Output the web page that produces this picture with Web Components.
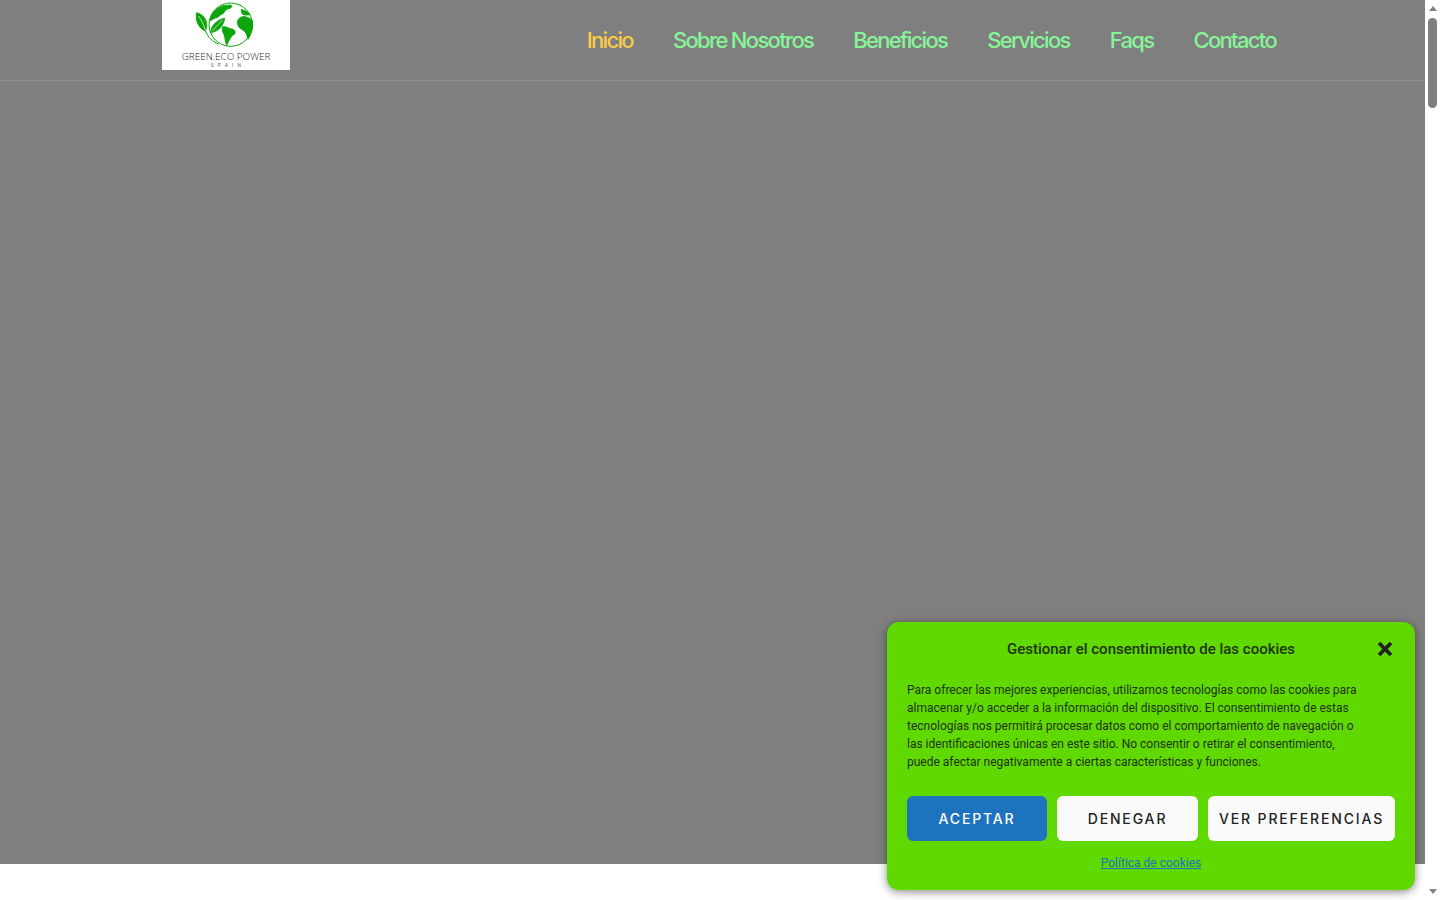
<!DOCTYPE html>
<html lang="es">
<head>
<meta charset="utf-8">
<title>Green Eco Power Spain</title>
<style>
  html, body { margin: 0; height: 100%; overflow: hidden; background: #fff; }
</style>
</head>
<body>
<site-page>
  <site-header slot="hero">
    <site-logo slot="logo"></site-logo>
    <nav-link active>Inicio</nav-link>
    <nav-link>Sobre Nosotros</nav-link>
    <nav-link>Beneficios</nav-link>
    <nav-link>Servicios</nav-link>
    <nav-link>Faqs</nav-link>
    <nav-link>Contacto</nav-link>
  </site-header>
  <cookie-banner slot="overlay">
    <span slot="title">Gestionar el consentimiento de las cookies</span>
    Para ofrecer las mejores experiencias, utilizamos tecnologías como las cookies para almacenar y/o acceder a la información del dispositivo. El consentimiento de estas tecnologías nos permitirá procesar datos como el comportamiento de navegación o las identificaciones únicas en este sitio. No consentir o retirar el consentimiento, puede afectar negativamente a ciertas características y funciones.
    <cookie-button slot="buttons" primary>Aceptar</cookie-button>
    <cookie-button slot="buttons">Denegar</cookie-button>
    <cookie-button slot="buttons">Ver preferencias</cookie-button>
    <span slot="policy">Política de cookies</span>
  </cookie-banner>
</site-page>

<script>
class SitePage extends HTMLElement {
  connectedCallback() {
    const shadow = this.attachShadow({ mode: 'open' });
    shadow.innerHTML = `
      <style>
        :host { display: flex; width: 1440px; height: 900px; position: relative; overflow: hidden; }
        .main { flex: 1; min-width: 0; background: #fff; }
        .hero { height: 864px; background: #7f7f7f; }
        .bar { width: 15px; background: #fff; display: flex; flex-direction: column; align-items: center; justify-content: space-between; padding: 6px 0 6px; box-sizing: border-box; position: relative; }
        .arrow { width: 0; height: 0; border-left: 4.5px solid transparent; border-right: 4.5px solid transparent; }
        .up { border-bottom: 5px solid #808080; }
        .down { border-top: 5px solid #808080; }
        .thumb { position: absolute; top: 18px; left: 3px; width: 9px; height: 90px; background: #7f7f7f; border-radius: 5px; }
      </style>
      <div class="main"><div class="hero"><slot name="hero"></slot></div></div>
      <div class="bar"><div class="arrow up"></div><div class="thumb"></div><div class="arrow down"></div></div>
      <slot name="overlay"></slot>
    `;
  }
}

class SiteHeader extends HTMLElement {
  connectedCallback() {
    const shadow = this.attachShadow({ mode: 'open' });
    shadow.innerHTML = `
      <style>
        :host { display: block; height: 81px; box-sizing: border-box; border-bottom: 1px solid #929292; }
        .row { display: flex; align-items: flex-start; padding-left: 162px; height: 80px; }
        nav { display: flex; gap: 40px; margin-left: auto; margin-right: 149px; height: 80px; align-items: center; }
      </style>
      <div class="row">
        <slot name="logo"></slot>
        <nav><slot></slot></nav>
      </div>
    `;
  }
}

class SiteLogo extends HTMLElement {
  connectedCallback() {
    const shadow = this.attachShadow({ mode: 'open' });
    shadow.innerHTML = `
      <style>
        :host { display: flex; flex-direction: column; align-items: center; width: 128px; height: 70px; background: #fff; overflow: hidden; }
        svg { display: block; width: 72px; height: 50px; flex: none; margin-left: -4px; }
        .name { font: 300 9.9px/10px "Open Sans", sans-serif; color: #222; white-space: nowrap; margin-top: 1px; }
        .sub { font: 400 5px/6px "Open Sans", sans-serif; color: #555; letter-spacing: 4px; margin: 1px -4px 0 0; }
      </style>
      <svg viewBox="0 0 216 150">
        <circle cx="128" cy="74" r="65" fill="none" stroke="#0ca50c" stroke-width="3"/>
        <g fill="#0ca50c" stroke="#0ca50c" stroke-width="2.5" stroke-linejoin="round">
          <path d="M66 62C68 42 82 25 105 17L128 15C134 18 132 24 122 26C112 28 110 36 104 42C94 44 92 54 82 54C76 56 72 62 66 62z"/>
          <path d="M148 65C150 55 160 48 172 50C180 52 190 56 193 62C196 80 192 100 180 118C176 108 176 96 164 90C154 84 148 78 148 65z"/>
          <path d="M160 28C168 32 178 32 186 44C176 46 168 46 162 42C164 38 158 34 160 28z"/>
          <path d="M104 80C112 78 118 84 128 86C140 88 144 94 140 102C130 108 126 116 122 124L116 136C112 128 112 116 108 104C104 96 100 88 104 80z"/>
          <path d="M68 98C68 80 84 60 110 55C108 72 96 94 68 98z"/>
          <path d="M26 38C44 42 58 58 56 78C56 84 54 90 52 92C34 88 20 62 26 38z"/>
        </g>
        <path fill="none" stroke="#fff" stroke-width="2" d="M32 48C40 60 48 76 52 90M72 94C82 82 92 72 104 60"/>
        <path fill="none" stroke="#0ca50c" stroke-width="3" d="M52 92C60 112 74 126 92 132"/>
      </svg>
      <div class="name">GREEN.ECO POWER</div>
      <div class="sub">SPAIN</div>
    `;
  }
}

class NavLink extends HTMLElement {
  connectedCallback() {
    const shadow = this.attachShadow({ mode: 'open' });
    shadow.innerHTML = `
      <style>
        :host { display: block; font: 500 22px/28px Inter, sans-serif; letter-spacing: -1.68px; color: #86f598; white-space: nowrap; cursor: pointer; }
        :host([active]) { color: #f7cd48; }
      </style>
      <slot></slot>
    `;
  }
}

class CookieButton extends HTMLElement {
  connectedCallback() {
    const shadow = this.attachShadow({ mode: 'open' });
    shadow.innerHTML = `
      <style>
        :host { display: flex; align-items: center; justify-content: center; flex: 1 1 auto; height: 45px; box-sizing: border-box; padding: 0 11px; border-radius: 6px; background: #f9f9f9; color: #222; font: 500 14px/1 Inter, sans-serif; letter-spacing: 1.85px; text-transform: uppercase; white-space: nowrap; cursor: pointer; }
        :host([primary]) { background: #1e73be; color: #fff; }
      </style>
      <slot></slot>
    `;
  }
}

class CookieBanner extends HTMLElement {
  connectedCallback() {
    const shadow = this.attachShadow({ mode: 'open' });
    shadow.innerHTML = `
      <style>
        :host { position: absolute; left: 887px; top: 622px; width: 528px; height: 268px; box-sizing: border-box; padding: 0 20px; background: #5fd900; border-radius: 12px; box-shadow: 0 2px 10px rgba(0,0,0,.45); color: #1f3313; font-family: Roboto, sans-serif; }
        .head { display: flex; align-items: center; justify-content: center; height: 54px; position: relative; }
        .title { font-size: 15px; font-weight: 500; line-height: 20px; }
        .close { position: absolute; right: 2px; top: 19px; width: 16px; height: 16px; }
        .text { margin: 5px 0 0; font-size: 12px; line-height: 18px; height: 90px; max-width: 456px; }
        .buttons { display: flex; gap: 10px; margin-top: 25px; }
        ::slotted(cookie-button:nth-of-type(1)) { flex: none; width: 140px; }
        ::slotted(cookie-button:nth-of-type(2)) { flex: none; width: 141px; }
        .policy { margin-top: 14px; text-align: center; font-size: 12px; line-height: 16px; color: #1e73be; text-decoration: underline; }
      </style>
      <div class="head">
        <div class="title"><slot name="title"></slot></div>
        <svg class="close" viewBox="0 0 16 16"><path d="M2 2l12 12M14 2L2 14" stroke="#222" stroke-width="3.8" fill="none"/></svg>
      </div>
      <p class="text"><slot></slot></p>
      <div class="buttons"><slot name="buttons"></slot></div>
      <div class="policy"><slot name="policy"></slot></div>
    `;
  }
}

customElements.define('site-page', SitePage);
customElements.define('site-header', SiteHeader);
customElements.define('site-logo', SiteLogo);
customElements.define('nav-link', NavLink);
customElements.define('cookie-button', CookieButton);
customElements.define('cookie-banner', CookieBanner);
</script>
</body>
</html>
